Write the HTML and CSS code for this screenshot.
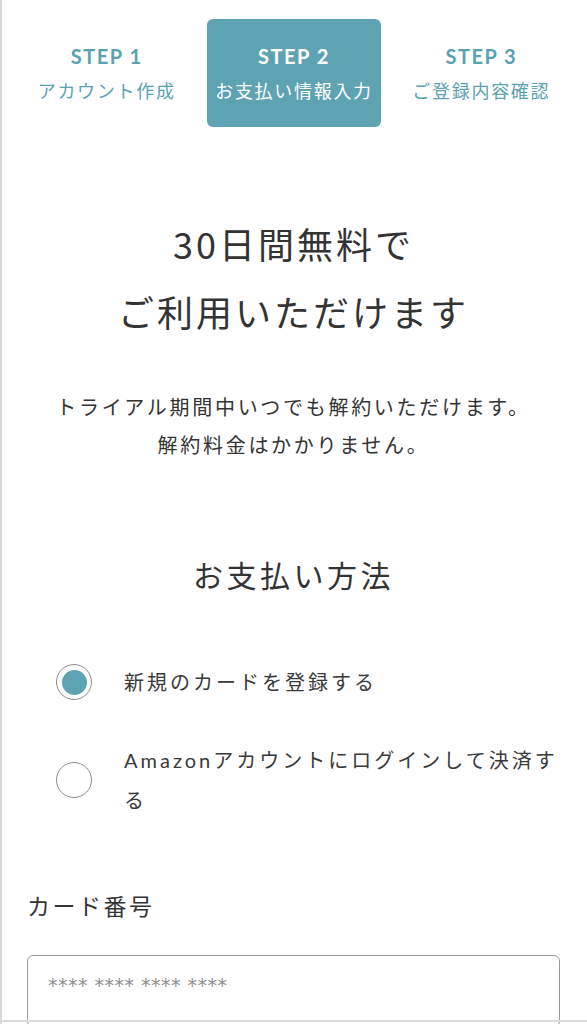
FILE: index.html
```html
<!DOCTYPE html>
<html lang="ja">
<head>
<meta charset="utf-8">
<title>お支払い情報入力</title>
<link rel="stylesheet" href="styles.css">
</head>
<body>
<div class="page">
  <nav class="steps">
    <div class="step">
      <div class="step-num">STEP 1</div>
      <div class="step-name">アカウント作成</div>
    </div>
    <div class="step active">
      <div class="step-num">STEP 2</div>
      <div class="step-name">お支払い情報入力</div>
    </div>
    <div class="step">
      <div class="step-num">STEP 3</div>
      <div class="step-name">ご登録内容確認</div>
    </div>
  </nav>

  <main class="content">
    <h1 class="headline">30日間無料で<br>ご利用いただけます</h1>
    <p class="note">トライアル期間中いつでも解約いただけます。<br>解約料金はかかりません。</p>

    <h2 class="section-title">お支払い方法</h2>

    <div class="options">
      <label class="option">
        <span class="radio checked"></span>
        <span class="option-text">新規のカードを登録する</span>
      </label>
      <label class="option">
        <span class="radio"></span>
        <span class="option-text">Amazonアカウントにログインして決済する</span>
      </label>
    </div>

    <div class="field">
      <div class="field-label">カード番号</div>
      <div class="input"><span class="placeholder">**** **** **** ****</span></div>
    </div>
  </main>
</div>
<div class="frame-line"></div>
</body>
</html>
```

FILE: styles.css
```css
html, body {
  margin: 0;
  padding: 0;
  background: #ffffff;
}

body {
  font-family: Lato, "Noto Sans CJK JP", sans-serif;
  color: #333333;
}

.page {
  min-height: 1024px;
  border-left: 2px solid #d9d9d9;
  box-sizing: border-box;
}

.steps {
  display: grid;
  grid-template-columns: repeat(3, 1fr);
  padding: 19px 12px 0 11px;
}

.step {
  margin: 0 7px;
  padding: 20px 0;
  border-radius: 6px;
  text-align: center;
  color: #5ba2b0;
}

.step.active {
  background: #5ea3b1;
  color: #ffffff;
}

.step-num {
  font-family: Lato, sans-serif;
  font-weight: 700;
  font-size: 20px;
  line-height: 34px;
  letter-spacing: 1.5px;
}

.step-name {
  font-family: "Noto Sans CJK JP", sans-serif;
  font-size: 18px;
  line-height: 34px;
  letter-spacing: 1.7px;
  white-space: nowrap;
}

.content {
  padding: 0 27px 0 25px;
}

.headline {
  margin: 82px 0 0;
  font-family: "Noto Sans CJK JP", sans-serif;
  font-weight: 400;
  font-size: 36px;
  line-height: 68px;
  letter-spacing: 3px;
  text-align: center;
  color: #333333;
}

.note {
  margin: 43px 0 0;
  font-family: "Noto Sans CJK JP", sans-serif;
  font-size: 20px;
  line-height: 38px;
  letter-spacing: 2.7px;
  text-align: center;
}

.section-title {
  margin: 87px 0 0;
  font-family: "Noto Sans CJK JP", sans-serif;
  font-weight: 400;
  font-size: 30px;
  line-height: 46px;
  letter-spacing: 3.5px;
  text-align: center;
}

.options {
  margin-top: 65px;
  padding-left: 29px;
  display: flex;
  flex-direction: column;
  gap: 38px;
}

.option {
  display: flex;
  align-items: center;
  gap: 32px;
}

.radio {
  flex: none;
  width: 36px;
  height: 36px;
  border: 1.5px solid #8a8a8a;
  border-radius: 50%;
  box-sizing: border-box;
  display: flex;
  align-items: center;
  justify-content: center;
}

.radio.checked::after {
  content: "";
  width: 25px;
  height: 25px;
  border-radius: 50%;
  background: #5ea3b1;
}

.option-text {
  font-family: Lato, "Noto Sans CJK JP", sans-serif;
  font-size: 20px;
  line-height: 40px;
  letter-spacing: 3px;
  color: #3a3a3a;
}

.field {
  margin-top: 65px;
}

.field-label {
  font-family: "Noto Sans CJK JP", sans-serif;
  font-size: 23px;
  line-height: 40px;
  letter-spacing: 2.5px;
}

.input {
  margin-top: 30px;
  height: 72px;
  border: 1.5px solid #9a9a9a;
  border-radius: 6px;
  box-sizing: border-box;
  padding: 18px 20px 0;
}

.placeholder {
  font-family: "DejaVu Sans", sans-serif;
  font-size: 19px;
  letter-spacing: 0.5px;
  color: #8e8e8e;
}

.frame-line {
  position: fixed;
  left: 0;
  right: 0;
  top: 1020px;
  height: 2px;
  background: #dcdcdc;
}
```
